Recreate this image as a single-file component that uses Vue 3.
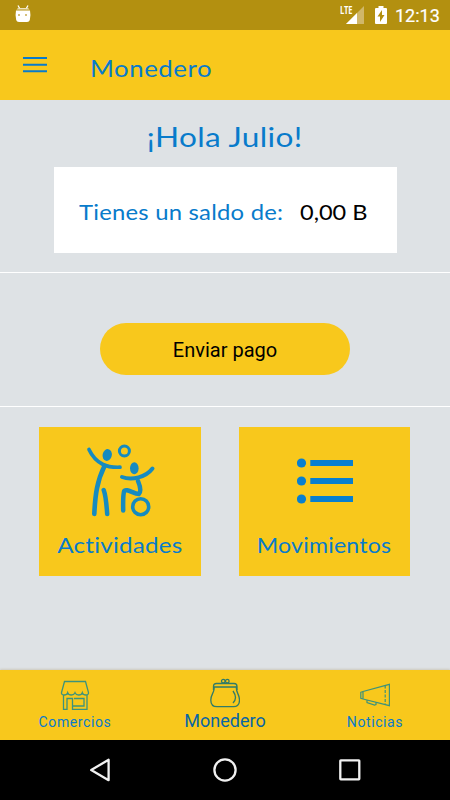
<script setup>
const balance = '0,00 B'
</script>

<template>
  <div class="screen">
    <div class="status">
      <svg class="droid" width="16" height="18" viewBox="0 0 16 18">
        <path d="M3 0.5L5 4M13 0.5L11 4" stroke="#fff" stroke-width="1.3" />
        <path d="M1.5 4.5Q2 3 4 3H12Q14 3 14.5 4.5Z" fill="#eee3bd" />
        <path d="M1 5.5H15Q16 10 14.8 15Q14.3 17 12 17H4Q1.7 17 1.2 15Q0 10 1 5.5Z" fill="#fff" />
        <path d="M3 9h2v2H3zM10 9h2v2h-2z" fill="#d5c07c" />
      </svg>
      <span class="grow"></span>
      <span class="lte">LTE</span>
      <svg class="signal" width="18" height="18" viewBox="0 0 18 18">
        <path d="M18 0V18H0Z" fill="#d0b769" />
        <path d="M11 7V18H0Z" fill="#fff" />
      </svg>
      <svg class="battery" width="12" height="18" viewBox="0 0 12 18">
        <path d="M3.5 0H8.5V2H11Q12 2 12 3V17Q12 18 11 18H1Q0 18 0 17V3Q0 2 1 2H3.5Z" fill="#fff" />
        <path d="M7 4V9H9.5L5 16V10.5H2.5Z" fill="#b39010" />
      </svg>
      <span class="clock">12:13</span>
    </div>

    <header class="bar">
      <svg class="menu" width="24" height="16" viewBox="0 0 24 16">
        <path d="M0 1H24M0 7.7H24M0 14.2H24" stroke="#087bcb" stroke-width="2" />
      </svg>
      <h1 class="title">Monedero</h1>
    </header>

    <main>
      <section class="greeting">
        <h2 class="hello">¡Hola Julio!</h2>
        <div class="card">
          <span class="label">Tienes un saldo de:</span>
          <span class="amount">{{ balance }}</span>
        </div>
      </section>
      <section class="pay">
        <button class="send">Enviar pago</button>
      </section>
      <section class="tiles">
        <div class="tile activities">
          <svg class="people" width="72" height="76" viewBox="0 0 72 76" fill="none" stroke="#168bc0" stroke-linecap="round" stroke-linejoin="round">
            <ellipse cx="22.2" cy="11" rx="4.6" ry="6" fill="#168bc0" stroke="none" transform="rotate(12 22.2 11)" />
            <ellipse cx="49.3" cy="24.3" rx="4.3" ry="6" fill="#168bc0" stroke="none" />
            <circle cx="39.4" cy="7" r="5" stroke-width="3" />
            <circle cx="55.7" cy="62.7" r="8" stroke-width="3.6" />
            <path d="M4 5.5C7 12 12 17.5 18 20.5C23 23 29 23.4 35 23.2" stroke-width="3.7" />
            <path d="M19.5 22C12 37 10.2 51 9.3 70" stroke-width="4.6" />
            <path d="M18.7 46C21 52 21.5 60 22.2 70" stroke-width="4.5" />
            <path d="M37 33C47 37 61 33 67.5 24.5" stroke-width="4" />
            <path d="M53 37C55.5 43 56 48 53.8 50C49 50 41 44 39.2 47C37.8 51 38.1 59 38.2 66.5" stroke-width="4.5" />
          </svg>
          <span class="caption">Actividades</span>
        </div>
        <div class="tile movements">
          <svg class="list" width="56" height="46" viewBox="0 0 56 46">
            <g fill="#087fd0">
              <circle cx="4.5" cy="5" r="4.6" /><circle cx="4.5" cy="23" r="4.6" /><circle cx="4.5" cy="41" r="4.6" />
              <path d="M13.3 2H56V8H13.3zM13.3 20H56V26H13.3zM13.3 38H56V44H13.3z" />
            </g>
          </svg>
          <span class="caption">Movimientos</span>
        </div>
      </section>
    </main>

    <nav class="tabs">
      <div class="tab">
        <svg width="30" height="30" viewBox="0 0 30 30" fill="none" stroke="#3d927b" stroke-width="1.3">
          <path d="M4.5 1.5H25.5L28.5 12.5Q28.7 15 26 15Q23 15 22.3 12.7Q21.5 15 18.7 15Q16 15 15 12.7Q14 15 11.3 15Q8.5 15 7.7 12.7Q7 15 4 15Q1.3 15 1.5 12.5Z" />
          <path d="M3.5 15V29.3H7V18.5H12.5V29.3H27V15M12.5 26H24V18.5H14" />
        </svg>
        <span class="tab-label">Comercios</span>
      </div>
      <div class="tab active">
        <svg width="30" height="30" viewBox="0 0 30 30" fill="none" stroke="#317b68" stroke-width="1.3">
          <circle cx="13.3" cy="3.2" r="1.8" /><circle cx="17.3" cy="3.2" r="1.8" />
          <path d="M3.5 12V8.5Q3.5 5.5 6.5 5.5H24Q27 5.5 27 8.5V12M4 9H26.5" />
          <path d="M4 9C5 14 .8 16 .8 22Q.8 28.7 7 28.7H23.5Q29.5 28.7 29.5 22C29.5 16 25.5 14 26.5 9M23 13Q28 20 23 25" />
        </svg>
        <span class="tab-label">Monedero</span>
      </div>
      <div class="tab">
        <svg width="30" height="30" viewBox="0 0 30 30" fill="none" stroke="#3d927b" stroke-width="1.2">
          <path d="M.8 12.3L3 11.5L29.4 4.3V25.7L3 19L.8 18.4ZM3 11.5V19M7 20V22.5L14.5 25L16 24.5V22.5" />
          <path d="M25.2 5.5V24.6" stroke-dasharray="3 1.5" />
        </svg>
        <span class="tab-label">Noticias</span>
      </div>
    </nav>

    <footer class="system">
      <svg width="20" height="24" viewBox="0 0 20 24"><path d="M1.2 12L18.6 1.8V22.2Z" /></svg>
      <svg width="24" height="24" viewBox="0 0 24 24"><circle cx="12" cy="12" r="10.6" /></svg>
      <svg width="22" height="22" viewBox="0 0 22 22"><rect x="1.3" y="1.3" width="19" height="19" rx=".5" /></svg>
    </footer>
  </div>
</template>

<style>
body {
  margin: 0;
}
</style>

<style scoped>
.screen {
  width: 450px;
  height: 800px;
  display: flex;
  flex-direction: column;
  overflow: hidden;
  background: #dee2e5;
  color: #087bcb;
  font-family: Lato, sans-serif;
}
.status {
  height: 30px;
  box-sizing: border-box;
  padding: 0 10px 0 15px;
  display: flex;
  align-items: center;
  background: #b39010;
  color: #fff;
  font-family: Roboto, sans-serif;
}
.droid {
  margin-top: -2px;
}
.grow {
  flex: 1;
}
.lte {
  align-self: flex-start;
  margin: 5px -6px 0 0;
  font: bold 10px/10px "Open Sans", sans-serif;
  letter-spacing: -0.3px;
  width: 12px;
  transform: scaleX(0.75);
  transform-origin: left;
}
.signal {
  margin-right: 11px;
}
.battery {
  margin-right: 8px;
}
.clock {
  margin-top: 2px;
  font-size: 18px;
  line-height: 20px;
  width: 45px;
  white-space: nowrap;
  -webkit-text-stroke: 0.2px #fff;
}
.bar {
  height: 70px;
  display: flex;
  align-items: center;
  background: #f8c81c;
}
.menu {
  margin: 0 43px 0 23px;
}
.title {
  margin: 5px 0 0;
  font-size: 23px;
  line-height: 30px;
  font-weight: 400;
  letter-spacing: 0.5px;
  transform: scaleX(1.12);
  transform-origin: left;
}
main {
  flex: 1;
}
.greeting {
  height: 172px;
  display: flex;
  flex-direction: column;
  align-items: center;
  border-bottom: 1px solid #fff;
}
.hello {
  margin: 19px 0 12px;
  font-size: 27px;
  line-height: 36px;
  font-weight: 400;
  letter-spacing: 0.3px;
  transform: scaleX(1.17);
}
.card {
  width: 343px;
  height: 86px;
  box-sizing: border-box;
  padding: 3px 0 0 25px;
  display: flex;
  align-items: center;
  background: #fff;
  font-size: 21px;
}
.label {
  width: 221px;
  letter-spacing: 0.2px;
  white-space: nowrap;
  transform: scaleX(1.135);
  transform-origin: left;
}
.amount {
  color: #000;
  white-space: nowrap;
  transform: scaleX(1.12);
  transform-origin: left;
}
.pay {
  height: 134px;
  box-sizing: border-box;
  padding-top: 50px;
  display: flex;
  justify-content: center;
  border-bottom: 1px solid #fff;
}
.send {
  width: 250px;
  height: 52px;
  padding: 2px 0 0;
  border: 0;
  border-radius: 26px;
  background: #f8c81c;
  color: #000;
  font-family: Roboto, sans-serif;
  font-size: 20px;
}
.tiles {
  display: flex;
  gap: 38px;
  padding: 19.5px 39px 0;
}
.tile {
  height: 149.5px;
  display: flex;
  flex-direction: column;
  align-items: center;
  background: #f8c81c;
}
.activities {
  width: 162px;
}
.movements {
  width: 171px;
}
.people {
  margin: 17px 0 11.5px 1px;
}
.list {
  margin: 31.5px 0 27px;
}
.caption {
  font-size: 22px;
  line-height: 28px;
  letter-spacing: 0.2px;
}
.activities .caption {
  transform: scaleX(1.1);
}
.movements .caption {
  transform: scaleX(1.05);
}
.tabs {
  height: 70px;
  display: grid;
  grid-template-columns: repeat(3, 150px);
  background: #f8c81c;
  box-shadow: 0 -1px 2px #ccc9bd;
  font-family: Roboto, sans-serif;
}
.tab {
  padding-top: 10px;
  display: flex;
  flex-direction: column;
  align-items: center;
  font-size: 14px;
}
.tab-label {
  line-height: 20px;
  margin-top: 2px;
  letter-spacing: 0.6px;
}
.active {
  padding-top: 8px;
  font-size: 18px;
  color: #0865a5;
}
.active .tab-label {
  margin-top: 3px;
  letter-spacing: 0;
}
.system {
  height: 60px;
  display: flex;
  justify-content: space-between;
  align-items: center;
  box-sizing: border-box;
  padding: 0 89px 0 90px;
  background: #000;
}
.system svg {
  fill: none;
  stroke: #f1f1f1;
  stroke-width: 2.3;
  stroke-linejoin: round;
}
</style>
